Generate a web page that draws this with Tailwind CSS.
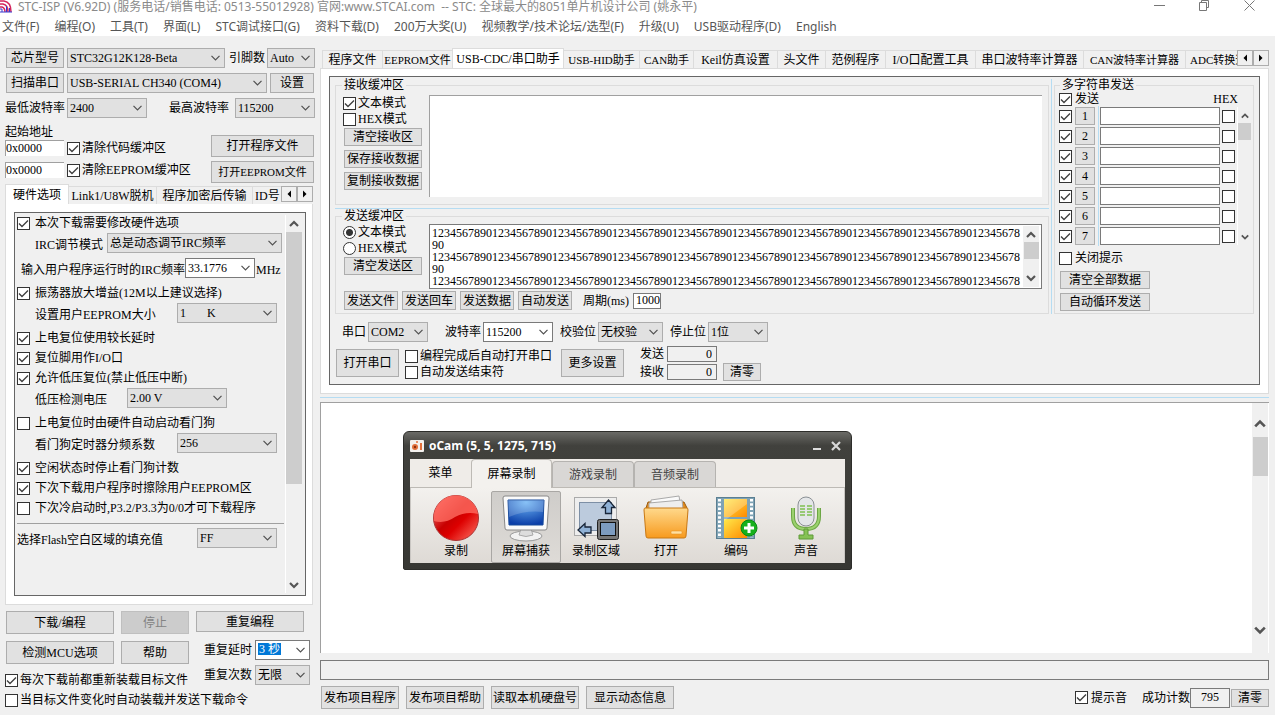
<!DOCTYPE html>
<html lang="zh-CN">
<head>
  <meta charset="UTF-8" />
  <meta name="viewport" content="width=device-width, initial-scale=1.0" />
  <title>STC-ISP (V6.92D)</title>
  <script src="https://cdn.jsdelivr.net/npm/@tailwindcss/browser@4"></script>
  <style>
    /* arrow of the drop-downs and tick of the check boxes */
    select {
      background-repeat: no-repeat;
      background-position: right 4px center;
      background-image: url("data:image/svg+xml,%3Csvg xmlns='http://www.w3.org/2000/svg' width='9' height='6'%3E%3Cpath d='M.5 .8L4.500 4.800L8.500 .8' fill='none' stroke='%23505050' stroke-width='1.200'/%3E%3C/svg%3E");
    }
    input[type="checkbox"]:checked {
      background-image: url("data:image/svg+xml,%3Csvg xmlns='http://www.w3.org/2000/svg' width='11' height='11'%3E%3Cpath d='M1 5.500L4 8.500L10 2.500' fill='none' stroke='%23404040' stroke-width='1.400'/%3E%3C/svg%3E");
    }
    input[type="radio"]:checked {
      background: radial-gradient(circle, #333 0 3px, #fff 4px);
    }
  </style>
</head>
<body class="min-h-screen flex flex-col bg-[#f0f0f0] text-black text-xs leading-3 font-['Liberation_Serif','Noto_Sans_CJK_SC',serif] overflow-hidden">

  <svg class="hidden">
    <symbol id="up" viewBox="0 0 10 8"><path d="M1 6L5 2L9 6" fill="none" stroke="#555" stroke-width="2.200" /></symbol>
    <symbol id="down" viewBox="0 0 10 8"><path d="M1 2L5 6L9 2" fill="none" stroke="#555" stroke-width="2.200" /></symbol>
    <symbol id="left" viewBox="0 0 6 8"><path d="M5 0.500V7.500L1.500 4Z" /></symbol>
    <symbol id="right" viewBox="0 0 6 8"><path d="M1 0.500V7.500L4.500 4Z" /></symbol>
  </svg>

  <!-- title bar and menu -->
  <header class="bg-white h-9 font-['Noto_Sans','Noto_Sans_CJK_SC',sans-serif]">
    <div class="h-[18px] flex items-start text-[#8a8a8a]">
      <svg class="w-3 h-[14px] shrink-0" viewBox="0 0 12 14" fill="none">
        <path d="M0 1H4Q11 2 11 12M0 4H3Q8 5 8 12M0 7H2Q5 8 5 12" stroke="#d4245c" stroke-width="1.500" />
        <path d="M0 9H2V12M6.500 6V12M9.500 8V12M0 12H12" stroke="#3a3ad0" />
      </svg>
      <h1 class="ml-1.5 leading-[14px] whitespace-pre">STC-ISP (V6.92D) (服务电话/销售电话: 0513-55012928) 官网:www.STCAI.com  -- STC: 全球最大的8051单片机设计公司 (姚永平)</h1>
      <div class="ml-auto mr-5 flex gap-[34px]">
        <button aria-label="最小化"><svg class="w-[11px] h-3" viewBox="0 0 11 12" stroke="#777"><path d="M0 5.500H11" /></svg></button>
        <button aria-label="还原"><svg class="w-[11px] h-3" viewBox="0 0 11 12" fill="none" stroke="#777"><path d="M.5 2.500H7.500V10.500H.5ZM2.500 2.500V.5H9.500V7.500H7.500" /></svg></button>
        <button aria-label="关闭"><svg class="w-[11px] h-3" viewBox="0 0 11 12" stroke="#777"><path d="M.5 .5L10.500 10.500M10.500 .5L.5 10.500" /></svg></button>
      </div>
    </div>
    <nav class="h-[18px] pl-0.5 flex items-center gap-[15px] text-[#555] leading-4 whitespace-nowrap">
      <a href="#">文件(F)</a>
      <a href="#">编程(O)</a>
      <a href="#">工具(T)</a>
      <a href="#">界面(L)</a>
      <a href="#">STC调试接口(G)</a>
      <a href="#">资料下载(D)</a>
      <a href="#">200万大奖(U)</a>
      <a href="#">视频教学/技术论坛/选型(F)</a>
      <a href="#">升级(U)</a>
      <a href="#">USB驱动程序(D)</a>
      <a href="#">English</a>
    </nav>
  </header>

  <div class="flex-1 flex gap-[5px] pt-3 pr-1.5 whitespace-nowrap [&_select]:appearance-none [&_select]:h-5 [&_select]:border [&_select]:pl-0.5 [&_select]:shrink-0 [&_input[type=checkbox]]:appearance-none [&_input[type=checkbox]]:size-[13px] [&_input[type=checkbox]]:shrink-0 [&_input[type=checkbox]]:bg-white [&_input[type=checkbox]]:border [&_input[type=checkbox]]:border-[#333]">

    <!-- left column: chip, port and hardware options -->
    <aside class="w-[315px] shrink-0 pl-[5px] flex flex-col">
      <div class="flex flex-col gap-[5px]">
        <div class="h-5 flex items-center pl-px">
          <button class="w-[58px] h-5 border border-[#adadad] bg-[#e1e1e1]">芯片型号</button>
          <select aria-label="芯片型号" class="ml-[3px] w-[158px] border-[#adadad] bg-[#e1e1e1]"><option>STC32G12K128-Beta</option></select>
          <label for="pins" class="flex-1 pl-1">引脚数</label>
          <select id="pins" class="w-12 border-[#adadad] bg-[#e1e1e1]"><option>Auto</option></select>
        </div>
        <div class="h-5 flex items-center pl-px gap-[3px]">
          <button class="w-[58px] h-5 border border-[#adadad] bg-[#e1e1e1]">扫描串口</button>
          <select aria-label="串口" class="w-[200px] border-[#adadad] bg-[#e1e1e1]"><option>USB-SERIAL CH340 (COM4)</option></select>
          <button class="w-11 h-5 border border-[#adadad] bg-[#e1e1e1]">设置</button>
        </div>
        <div class="h-5 flex items-center">
          <label for="minbaud" class="w-[62px]">最低波特率</label>
          <select id="minbaud" class="w-20 border-[#adadad] bg-[#e1e1e1]"><option>2400</option></select>
          <label for="maxbaud" class="flex-1 pl-[22px]">最高波特率</label>
          <select id="maxbaud" class="w-20 border-[#adadad] bg-[#e1e1e1]"><option>115200</option></select>
        </div>
      </div>

      <div class="mt-2 flex justify-between">
        <div>
          <div class="h-3">起始地址</div>
          <div class="mt-0.5 flex items-center gap-[3px]">
            <input aria-label="代码起始地址" value="0x0000" class="w-[59px] h-4 border-t border-l border-[#a0a0a0] bg-white" />
            <label class="flex items-center gap-0.5"><input type="checkbox" checked />清除代码缓冲区</label>
          </div>
          <div class="mt-1.5 flex items-center gap-[3px]">
            <input aria-label="EEPROM起始地址" value="0x0000" class="w-[59px] h-4 border-t border-l border-[#a0a0a0] bg-white" />
            <label class="flex items-center gap-0.5"><input type="checkbox" checked />清除EEPROM缓冲区</label>
          </div>
        </div>
        <div class="pt-[9px] pr-px flex flex-col gap-1">
          <button class="w-[103px] h-[22px] border border-[#adadad] bg-[#e1e1e1]">打开程序文件</button>
          <button class="w-[103px] h-[22px] border border-[#adadad] bg-[#e1e1e1] text-[11px]">打开EEPROM文件</button>
        </div>
      </div>

      <div class="mt-px h-5 flex items-end pr-0.5">
        <button class="w-16 h-5 shrink-0 border border-b-0 border-[#dcdcdc] bg-white">硬件选项</button>
        <button class="w-[88px] h-[18px] shrink-0 border-t border-r border-[#dcdcdc]">Link1/U8W脱机</button>
        <button class="w-24 h-[18px] shrink-0 border-t border-r border-[#dcdcdc]">程序加密后传输</button>
        <button class="flex-1 h-[18px] pl-0.5 text-left overflow-hidden border-t border-[#dcdcdc]">ID号</button>
        <button aria-label="向左" class="w-4 h-4 mb-0.5 grid place-items-center border border-[#adadad] bg-[#f0f0f0]"><svg class="w-1.5 h-2"><use href="#left" /></svg></button>
        <button aria-label="向右" class="w-4 h-4 mb-0.5 grid place-items-center border border-[#adadad] bg-[#f0f0f0]"><svg class="w-1.5 h-2"><use href="#right" /></svg></button>
      </div>

      <div class="flex-1 mr-0.5 bg-white border border-t-0 border-[#dcdcdc] p-2 pr-1.5 flex">
        <div class="flex-1 border border-[#666] bg-[#f0f0f0] pr-[3px] flex">
          <div class="flex-1 pl-0.5">
            <div class="h-5 flex items-center">
              <label class="flex items-center gap-[5px]"><input type="checkbox" checked />本次下载需要修改硬件选项</label>
            </div>
            <div class="h-5 flex items-center justify-between pl-[18px] pr-[3px]">
              <label for="irc" class="pt-1">IRC调节模式</label>
              <select id="irc" class="w-[175px] border-[#adadad] bg-[#e1e1e1]"><option>总是动态调节IRC频率</option></select>
            </div>
            <div class="h-[30px] flex items-center pl-1">
              <label for="freq" class="w-[164px] pt-1">输入用户程序运行时的IRC频率</label>
              <select id="freq" class="w-[70px] border-[#7a7a7a] bg-white"><option>33.1776</option></select>
              <span class="pl-px pt-1">MHz</span>
            </div>
            <div class="h-5 flex items-center">
              <label class="flex items-center gap-[5px]"><input type="checkbox" checked />振荡器放大增益(12M以上建议选择)</label>
            </div>
            <div class="h-5 flex items-center justify-between pl-[18px] pr-2">
              <label for="eesize" class="pt-1">设置用户EEPROM大小</label>
              <select id="eesize" class="w-[100px] border-[#adadad] bg-[#e1e1e1]"><option>1 &nbsp;&nbsp;&nbsp;&nbsp;&nbsp; K</option></select>
            </div>
            <div class="mt-[5px] h-5 flex items-center">
              <label class="flex items-center gap-[5px]"><input type="checkbox" checked />上电复位使用较长延时</label>
            </div>
            <div class="h-5 flex items-center">
              <label class="flex items-center gap-[5px]"><input type="checkbox" checked />复位脚用作I/O口</label>
            </div>
            <div class="h-5 flex items-center">
              <label class="flex items-center gap-[5px]"><input type="checkbox" checked />允许低压复位(禁止低压中断)</label>
            </div>
            <div class="h-5 flex items-center pl-[18px]">
              <label for="lvd" class="w-[92px] pt-1">低压检测电压</label>
              <select id="lvd" class="w-[100px] border-[#adadad] bg-[#e1e1e1]"><option>2.00 V</option></select>
            </div>
            <div class="mt-[5px] h-5 flex items-center">
              <label class="flex items-center gap-[5px]"><input type="checkbox" />上电复位时由硬件自动启动看门狗</label>
            </div>
            <div class="h-5 flex items-center justify-between pl-[18px] pr-2">
              <label for="wdt" class="pt-1">看门狗定时器分频系数</label>
              <select id="wdt" class="w-[100px] border-[#adadad] bg-[#e1e1e1]"><option>256</option></select>
            </div>
            <div class="mt-[5px] h-5 flex items-center">
              <label class="flex items-center gap-[5px]"><input type="checkbox" checked />空闲状态时停止看门狗计数</label>
            </div>
            <div class="h-5 flex items-center">
              <label class="flex items-center gap-[5px]"><input type="checkbox" checked />下次下载用户程序时擦除用户EEPROM区</label>
            </div>
            <div class="h-5 flex items-center">
              <label class="flex items-center gap-[5px]"><input type="checkbox" />下次冷启动时,P3.2/P3.3为0/0才可下载程序</label>
            </div>
            <div class="mt-[5px] h-[5px] border-t border-[#a0a0a0] mr-px"></div>
            <div class="h-5 flex items-center justify-between pr-2">
              <label for="fill" class="pt-1">选择Flash空白区域的填充值</label>
              <select id="fill" class="w-20 border-[#adadad] bg-[#e1e1e1]"><option>FF</option></select>
            </div>
          </div>
          <div class="w-[17px] my-0.5 border-l border-white flex flex-col items-center">
            <svg class="w-[10px] h-2 mt-[5px] mb-1 shrink-0"><use href="#up" /></svg>
            <div class="w-4 h-[252px] bg-[#cdcdcd]"></div>
            <svg class="w-[10px] h-2 mt-auto mb-1 shrink-0"><use href="#down" /></svg>
          </div>
        </div>
      </div>

      <div class="mt-1.5 pb-[7px] pl-px flex justify-between">
        <div class="w-[183px]">
          <div class="flex gap-[7px]">
            <button class="w-[108px] h-[23px] border border-[#adadad] bg-[#e1e1e1]">下载/编程</button>
            <button disabled class="w-[68px] h-[23px] border border-[#bfbfbf] bg-[#ccc] text-[#838383]">停止</button>
          </div>
          <div class="mt-[7px] flex gap-[7px]">
            <button class="w-[108px] h-[23px] border border-[#adadad] bg-[#e1e1e1]">检测MCU选项</button>
            <button class="w-[68px] h-[23px] border border-[#adadad] bg-[#e1e1e1]">帮助</button>
          </div>
          <label class="mt-2 h-4 -ml-px flex items-center gap-0.5"><input type="checkbox" checked />每次下载前都重新装载目标文件</label>
          <label class="mt-1 h-4 -ml-px flex items-center gap-0.5"><input type="checkbox" />当目标文件变化时自动装载并发送下载命令</label>
        </div>
        <div class="w-[119px]">
          <button class="w-[108px] h-[21px] border border-[#adadad] bg-[#e1e1e1]">重复编程</button>
          <div class="mt-2 flex items-center pl-2">
            <label for="delay" class="w-[51px]">重复延时</label>
            <div class="relative">
              <select id="delay" class="w-[55px] border-[#7a7a7a] bg-white text-transparent"><option>3 秒</option></select>
              <span class="absolute left-[3px] top-[3px] h-3 px-px bg-[#0078d7] text-white pointer-events-none">3 秒</span>
            </div>
          </div>
          <div class="mt-[5px] flex items-center pl-2">
            <label for="times" class="w-[51px]">重复次数</label>
            <select id="times" class="w-[55px] border-[#adadad] bg-[#e1e1e1]"><option>无限</option></select>
          </div>
        </div>
      </div>
    </aside>

    <!-- right column: tool tabs, log and status -->
    <main class="flex-1 min-w-0 flex flex-col">
      <div class="h-5 flex items-end pl-0.5">
        <button class="w-[60px] h-[18px] shrink-0 border-t border-l border-[#dcdcdc]">程序文件</button>
        <button class="w-[70px] h-[18px] shrink-0 border-t border-l border-[#dcdcdc] text-[11px]">EEPROM文件</button>
        <button class="w-28 h-5 shrink-0 border border-b-0 border-[#dcdcdc] bg-white">USB-CDC/串口助手</button>
        <button class="w-[76px] h-[18px] shrink-0 border-t border-r border-[#dcdcdc] text-[11px]">USB-HID助手</button>
        <button class="w-[54px] h-[18px] shrink-0 border-t border-r border-[#dcdcdc] text-[11px]">CAN助手</button>
        <button class="w-[84px] h-[18px] shrink-0 border-t border-r border-[#dcdcdc]">Keil仿真设置</button>
        <button class="w-12 h-[18px] shrink-0 border-t border-r border-[#dcdcdc]">头文件</button>
        <button class="w-[60px] h-[18px] shrink-0 border-t border-r border-[#dcdcdc]">范例程序</button>
        <button class="w-[90px] h-[18px] shrink-0 border-t border-r border-[#dcdcdc]">I/O口配置工具</button>
        <button class="w-[108px] h-[18px] shrink-0 border-t border-r border-[#dcdcdc]">串口波特率计算器</button>
        <button class="w-[102px] h-[18px] shrink-0 border-t border-r border-[#dcdcdc] text-[11px]">CAN波特率计算器</button>
        <button class="flex-1 min-w-0 h-[18px] pl-1 text-left overflow-hidden border-t border-[#dcdcdc] text-[11px]">ADC转换速度计算器</button>
        <button aria-label="向左" class="w-4 h-4 mb-0.5 shrink-0 grid place-items-center border border-[#adadad] bg-[#f0f0f0]"><svg class="w-1.5 h-2"><use href="#left" /></svg></button>
        <button aria-label="向右" class="w-4 h-4 mb-0.5 shrink-0 grid place-items-center border border-[#adadad] bg-[#f0f0f0]"><svg class="w-1.5 h-2"><use href="#right" /></svg></button>
      </div>

      <div class="bg-white border border-[#dcdcdc] p-2 pt-[7px]">
        <div class="border border-[#666] bg-[#f0f0f0] h-[309px] px-[5px] pt-0.5">
          <div class="flex">
            <div class="flex-1 min-w-0 pr-0.5 border-r border-[#b5dcf2]">
              <fieldset class="h-[126px] border border-[#dcdcdc] px-2">
                <legend class="h-3 -ml-0.5 px-0.5">接收缓冲区</legend>
                <div class="flex pt-1">
                  <div class="w-[85px] flex flex-col">
                    <label class="h-4 flex items-center gap-0.5 -ml-px"><input type="checkbox" checked />文本模式</label>
                    <label class="h-4 flex items-center gap-0.5 -ml-px"><input type="checkbox" />HEX模式</label>
                    <div class="pt-px flex flex-col gap-1">
                      <button class="w-[78px] h-[18px] border border-[#adadad] bg-[#e1e1e1]">清空接收区</button>
                      <button class="w-[78px] h-[18px] border border-[#adadad] bg-[#e1e1e1]">保存接收数据</button>
                      <button class="w-[78px] h-[18px] border border-[#adadad] bg-[#e1e1e1]">复制接收数据</button>
                    </div>
                  </div>
                  <textarea aria-label="接收缓冲区" class="flex-1 h-[102px] -mr-0.5 resize-none bg-white border-t border-l border-[#a0a0a0]"></textarea>
                </div>
              </fieldset>
              <div class="mt-[3px] mb-px h-px bg-[#b5dcf2]"></div>
              <fieldset class="h-[104px] border border-[#dcdcdc] px-2">
                <legend class="h-3 -ml-0.5 px-0.5">发送缓冲区</legend>
                <div class="flex pt-0.5">
                  <div class="w-[85px] flex flex-col">
                    <label class="h-4 flex items-center gap-0.5 -ml-px"><input type="radio" name="mode" checked class="appearance-none size-[13px] rounded-full border border-[#333]" />文本模式</label>
                    <label class="h-4 flex items-center gap-0.5 -ml-px"><input type="radio" name="mode" class="appearance-none size-[13px] rounded-full border border-[#333] bg-white" />HEX模式</label>
                    <button class="mt-px w-[78px] h-[18px] border border-[#adadad] bg-[#e1e1e1]">清空发送区</button>
                  </div>
                  <div class="flex-1 min-w-0 h-[65px] -mr-0.5 flex bg-white border border-[#7a7a7a]">
                    <textarea aria-label="发送缓冲区" id="sendText" class="flex-1 min-w-0 resize-none overflow-hidden break-all pl-0.5 pt-0.5 pr-px outline-none"></textarea>
                    <div class="w-4 my-px mr-0.5 bg-[#f0f0f0] flex flex-col items-center">
                      <svg class="w-[10px] h-2 mt-[5px] mb-[3px] shrink-0"><use href="#up" /></svg>
                      <div class="w-[15px] h-[17px] bg-[#cdcdcd]"></div>
                      <svg class="w-[10px] h-2 mt-auto mb-[5px] shrink-0"><use href="#down" /></svg>
                    </div>
                  </div>
                </div>
                <div class="mt-0.5 flex items-center gap-1">
                  <button class="w-[54px] h-[19px] border border-[#adadad] bg-[#e1e1e1]">发送文件</button>
                  <button class="w-[54px] h-[19px] border border-[#adadad] bg-[#e1e1e1]">发送回车</button>
                  <button class="w-[54px] h-[19px] border border-[#adadad] bg-[#e1e1e1]">发送数据</button>
                  <button class="w-[54px] h-[19px] border border-[#adadad] bg-[#e1e1e1]">自动发送</button>
                  <label for="period" class="pl-[7px] w-[53px]">周期(ms)</label>
                  <input id="period" value="1000" class="w-7 h-4 pl-0.5 border border-[#7a7a7a] bg-white" />
                </div>
              </fieldset>
            </div>

            <fieldset class="ml-0.5 w-[200px] shrink-0 border border-[#dcdcdc] pl-1 pr-0.5">
              <legend class="h-3 ml-px px-0.5">多字符串发送</legend>
              <div class="h-4 flex items-center justify-between pr-[13px]">
                <label class="flex items-center gap-[3px]"><input type="checkbox" checked />发送</label>
                <span>HEX</span>
              </div>
              <div class="flex">
                <div id="strings" class="flex-1 flex flex-col gap-0.5"></div>
                <div class="w-[14px] border-l border-white flex flex-col items-center">
                  <svg class="w-2 h-2 mt-[5px] mb-[3px] shrink-0"><use href="#up" /></svg>
                  <div class="w-[13px] h-[17px] bg-[#cdcdcd]"></div>
                  <svg class="w-2 h-2 mt-auto mb-1 shrink-0"><use href="#down" /></svg>
                </div>
              </div>
              <label class="mt-1.5 h-[14px] flex items-center gap-[3px]"><input type="checkbox" />关闭提示</label>
              <div class="mt-1.5 mb-px pl-px flex flex-col gap-1">
                <button class="w-[90px] h-[18px] border border-[#adadad] bg-[#e1e1e1]">清空全部数据</button>
                <button class="w-[90px] h-[18px] border border-[#adadad] bg-[#e1e1e1]">自动循环发送</button>
              </div>
            </fieldset>
          </div>

          <div class="mt-2 h-5 flex items-center pl-[7px]">
            <label for="com" class="w-[26px]">串口</label>
            <select id="com" class="w-[60px] border-[#adadad] bg-[#e1e1e1]"><option>COM2</option></select>
            <label for="baud" class="ml-[17px] w-[38px]">波特率</label>
            <select id="baud" class="w-[70px] border-[#7a7a7a] bg-white"><option>115200</option></select>
            <label for="parity" class="ml-[7px] w-[38px]">校验位</label>
            <select id="parity" class="w-[65px] border-[#adadad] bg-[#e1e1e1]"><option>无校验</option></select>
            <label for="stop" class="ml-[7px] w-[38px]">停止位</label>
            <select id="stop" class="w-[60px] border-[#adadad] bg-[#e1e1e1]"><option>1位</option></select>
          </div>
          <div class="mt-1 flex pl-px">
            <button class="mt-[3px] w-[63px] h-7 border border-[#adadad] bg-[#e1e1e1]">打开串口</button>
            <div class="mt-0.5 ml-1.5 w-[156px]">
              <label class="h-4 flex items-center gap-0.5"><input type="checkbox" />编程完成后自动打开串口</label>
              <label class="h-4 flex items-center gap-0.5"><input type="checkbox" />自动发送结束符</label>
            </div>
            <button class="mt-[3px] w-[63px] h-7 border border-[#adadad] bg-[#e1e1e1]">更多设置</button>
            <div class="ml-4 flex flex-col gap-0.5">
              <label class="flex items-center gap-[3px]">发送<input readonly value="0" class="w-[50px] h-4 pr-1 text-right border border-[#7a7a7a]" /></label>
              <label class="flex items-center gap-[3px]">接收<input readonly value="0" class="w-[50px] h-4 pr-1 text-right border border-[#7a7a7a]" /></label>
            </div>
            <button class="ml-1.5 mt-[17px] w-[38px] h-[18px] border border-[#adadad] bg-[#e1e1e1]">清零</button>
          </div>
        </div>
      </div>

      <div class="mt-[3px] mb-1 h-px bg-[#b5dcf2]"></div>
      <div class="flex-1 flex bg-white border-t border-l border-[#a0a0a0] pr-px">
        <div class="flex-1"></div>
        <div class="w-4 bg-[#f0f0f0] flex flex-col items-center">
          <svg class="w-3 h-[10px] mt-4 mb-2 shrink-0"><use href="#up" /></svg>
          <div class="w-[15px] h-[39px] bg-[#cdcdcd]"></div>
          <svg class="w-3 h-[10px] mt-auto mb-[18px] shrink-0"><use href="#down" /></svg>
        </div>
      </div>
      <div class="mt-[7px] h-5 border border-[#7a7a7a]"></div>
      <div class="mt-1.5 mb-1.5 h-[23px] flex items-center pl-px">
        <div class="flex gap-[7px]">
          <button class="w-[78px] h-[23px] border border-[#adadad] bg-[#e1e1e1]">发布项目程序</button>
          <button class="w-[78px] h-[23px] border border-[#adadad] bg-[#e1e1e1]">发布项目帮助</button>
          <button class="w-[88px] h-[23px] border border-[#adadad] bg-[#e1e1e1]">读取本机硬盘号</button>
          <button class="w-[88px] h-[23px] border border-[#adadad] bg-[#e1e1e1]">显示动态信息</button>
        </div>
        <label class="ml-auto flex items-center gap-[3px]"><input type="checkbox" checked />提示音</label>
        <label for="count" class="ml-[15px]">成功计数</label>
        <input id="count" readonly value="795" class="w-10 h-5 text-center border border-[#7a7a7a]" />
        <button class="ml-px w-[38px] h-[18px] border border-[#adadad] bg-[#e1e1e1]">清零</button>
      </div>
    </main>
  </div>

  <!-- oCam recorder floating over the log -->
  <section class="absolute left-[403px] top-[431px] w-[449px] rounded-t-md rounded-b-xs border border-[#2d2d2a] bg-linear-to-b from-[#6a6a66] via-[#41413d] via-10% to-[#373733] px-1.5 pb-1.5 font-['Open_Sans','Noto_Sans_CJK_SC',sans-serif]">
    <div class="h-[27px] flex items-center">
      <svg class="w-[14px] h-3" viewBox="0 0 14 12">
        <rect width="14" height="12" rx="1" fill="#f4f1ee" />
        <circle cx="5" cy="7" r="3" fill="#e2703c" /><circle cx="5" cy="7" r="1.200" fill="#8a2f10" />
        <rect x="10" y="3" width="2" height="7" fill="#e2703c" /><circle cx="7" cy="2" r="1" fill="#e2703c" />
      </svg>
      <h2 class="ml-[5px] text-xs font-bold text-white">oCam (5, 5, 1275, 715)</h2>
      <button aria-label="最小化" class="ml-auto"><svg class="w-2 h-3" viewBox="0 0 8 12"><path d="M0 9H8" stroke="#ddd" stroke-width="2" /></svg></button>
      <button aria-label="关闭" class="ml-[10px] mr-1"><svg class="w-[10px] h-[10px]" viewBox="0 0 10 10"><path d="M1 1L9 9M9 1L1 9" stroke="#d8d8d8" stroke-width="2.200" /></svg></button>
    </div>
    <div class="bg-[#efece8]">
      <div class="h-[29px] flex items-end border-b border-[#bdbab5] text-xs">
        <button class="w-[61px] h-7">菜单</button>
        <button class="-mb-px w-[81px] h-[29px] rounded-t border border-b-0 border-[#bdbab5] bg-[#f3f1ee]">屏幕录制</button>
        <button class="w-[82px] h-[26px] rounded-t border border-b-0 border-[#b5b3b0] bg-[#d9d7d5] text-[#444]">游戏录制</button>
        <button class="w-[82px] h-[26px] rounded-t border border-b-0 border-[#b5b3b0] bg-[#d9d7d5] text-[#444]">音频录制</button>
      </div>
      <div class="h-[75px] pl-[10px] pt-[3px] flex border-x border-[#c9c6c2] bg-linear-to-b from-[#f3f1ee] to-[#dedad5]">
        <button class="w-[70px] h-[71px] shrink-0 flex flex-col items-center pt-[3px]">
          <svg class="size-12" viewBox="0 0 48 48">
            <defs><linearGradient id="rec" x1="0" y1="0" x2="1" y2="1"><stop offset="0" stop-color="#f88" /><stop offset=".45" stop-color="#c80000" /><stop offset=".6" stop-color="#d00" /><stop offset="1" stop-color="#ff7a6a" /></linearGradient></defs>
            <circle cx="24" cy="24" r="22.500" fill="url(#rec)" stroke="#a33" />
            <path d="M2 27A22 22 0 0 1 46 20Q34 17 23 23Q13 30 2 27Z" fill="#ff6b60" opacity=".8" />
          </svg>
          <span class="mt-[3px]">录制</span>
        </button>
        <button class="w-[70px] h-[72px] shrink-0 flex flex-col items-center pt-0.5 rounded-xs border border-[#a9a7a4] bg-linear-to-b from-[#cfcdca] to-[#dedbd7]">
          <svg class="size-12" viewBox="0 0 48 48">
            <defs><radialGradient id="scr" cx=".5" cy=".1" r=".9"><stop offset="0" stop-color="#6db4f5" /><stop offset="1" stop-color="#0b3ea8" /></radialGradient></defs>
            <ellipse cx="24" cy="42" rx="16" ry="5" fill="#f2f2f2" stroke="#999" />
            <path d="M19 35H29L31 41Q24 44 17 41Z" fill="#ddd" stroke="#aaa" />
            <path d="M3 2H45Q47 2 47 4L45 34Q45 36 43 36H5Q3 36 3 34L1 4Q1 2 3 2Z" fill="#fafafa" stroke="#888" />
            <path d="M6 6H42L41 31H7Z" fill="url(#scr)" stroke="#174a9c" />
            <path d="M6 6H42L41 18Q24 16 7 23Z" fill="#fff" opacity=".18" />
          </svg>
          <span class="mt-[3px]">屏幕捕获</span>
        </button>
        <button class="w-[70px] h-[71px] shrink-0 flex flex-col items-center pt-[3px]">
          <svg class="size-12" viewBox="0 0 48 48">
            <rect x="2.500" y="3.500" width="42" height="38" fill="#eee" stroke="#aaa" />
            <rect x="7.500" y="8.500" width="32" height="28" fill="#bccbdd" stroke="#7d8fa5" />
            <path d="M36.500 6L43 13.500H39.500V19.500H33.500V13.500H30Z" fill="#8fb1d6" stroke="#182538" stroke-width="1.300" />
            <path d="M6 36L13 29.500V33H19V39H13V42.500Z" fill="#8fb1d6" stroke="#182538" stroke-width="1.300" />
            <rect x="25.500" y="25.500" width="21" height="20" rx="2" fill="#777" stroke="#222" />
            <rect x="28.500" y="28.500" width="15" height="13" fill="#7d9cc0" stroke="#111" />
          </svg>
          <span class="mt-[3px]">录制区域</span>
        </button>
        <button class="w-[70px] h-[71px] shrink-0 flex flex-col items-center pt-[3px]">
          <svg class="size-12" viewBox="0 0 48 48">
            <defs><linearGradient id="fold" x1="0" y1="0" x2="0" y2="1"><stop offset="0" stop-color="#ffd98c" /><stop offset="1" stop-color="#f79a1e" /></linearGradient></defs>
            <path d="M4 14L6 8H42L45 14V20H4Z" fill="#e08a1c" stroke="#9a5c10" />
            <path d="M9 6L37 2L39 14H9Z" fill="#fafafa" stroke="#aaa" />
            <path d="M7 9L40 6L41 15H7Z" fill="#eee" stroke="#aaa" />
            <path d="M3 14H45Q46 14 46 16L44 42Q44 44 42 44H6Q4 44 4 42L2 16Q2 14 3 14Z" fill="url(#fold)" stroke="#c87814" />
            <rect x="29" y="37" width="11" height="3" rx="1" fill="#ffe0a0" stroke="#e08a1c" stroke-width=".5" />
          </svg>
          <span class="mt-[3px]">打开</span>
        </button>
        <button class="w-[70px] h-[71px] shrink-0 flex flex-col items-center pt-[3px]">
          <svg class="size-12" viewBox="0 0 48 48">
            <defs><linearGradient id="film" x1="0" y1="0" x2="1" y2="1"><stop offset="0" stop-color="#ffe94a" /><stop offset="1" stop-color="#ff8a00" /></linearGradient></defs>
            <rect x="4.500" y="3.500" width="38" height="41" fill="#7fa3b5" stroke="#5b7f92" />
            <path d="M7.500 5V44M39.500 5V44" stroke="#fff" stroke-width="3" stroke-dasharray="2.500 1.800" />
            <rect x="12" y="5" width="23" height="18" fill="url(#film)" /><rect x="12" y="25" width="23" height="19" fill="url(#film)" />
            <path d="M12 5H35V10L12 27Z" fill="#fff" opacity=".25" />
            <circle cx="37" cy="34" r="8" fill="#16b01c" stroke="#0b8a12" />
            <path d="M37 29V39M32 34H42" stroke="#fff" stroke-width="3" />
          </svg>
          <span class="mt-[3px]">编码</span>
        </button>
        <button class="w-[70px] h-[71px] shrink-0 flex flex-col items-center pt-[3px]">
          <svg class="size-12" viewBox="0 0 48 48">
            <path d="M11 14V22Q11 35 24 35Q37 35 37 22V14" fill="none" stroke="#6ca644" stroke-width="4" />
            <path d="M11 14V22Q11 35 24 35Q37 35 37 22V14" fill="none" stroke="#9bd16e" stroke-width="2" />
            <path d="M22 35H26V41H31V45H17V41H22Z" fill="#86c255" stroke="#5f9a38" />
            <rect x="16" y="3" width="16" height="29" rx="8" fill="#e4e6e8" stroke="#8a8f94" />
            <path d="M18 12H23M18 15H23M18 18H23M18 21H23M25 12H30M25 15H30M25 18H30M25 21H30" stroke="#7fc050" stroke-width="1.300" />
          </svg>
          <span class="mt-[3px]">声音</span>
        </button>
      </div>
    </div>
  </section>

  <script>
    const line = '1234567890'.repeat(10);
    document.getElementById('sendText').value = [line, line, line].join('\n');

    // one row for each string of the multi-string sender
    const strings = document.getElementById('strings');
    for (let i = 1; i <= 7; i++) {
      const row = document.createElement('div');
      row.className = 'h-[18px] flex items-center';
      row.innerHTML = `
        <input type="checkbox" checked aria-label="选择 ${i}">
        <button class="ml-[3px] w-5 h-[18px] border border-[#adadad] bg-[#e1e1e1]">${i}</button>
        <div class="ml-[3px] w-px h-5 bg-[#b5dcf2]"></div>
        <input aria-label="字符串 ${i}" class="ml-px w-[120px] h-[18px] border border-[#7a7a7a] bg-white">
        <input type="checkbox" aria-label="HEX ${i}" class="ml-0.5">`;
      strings.appendChild(row);
    }
  </script>
</body>
</html>
